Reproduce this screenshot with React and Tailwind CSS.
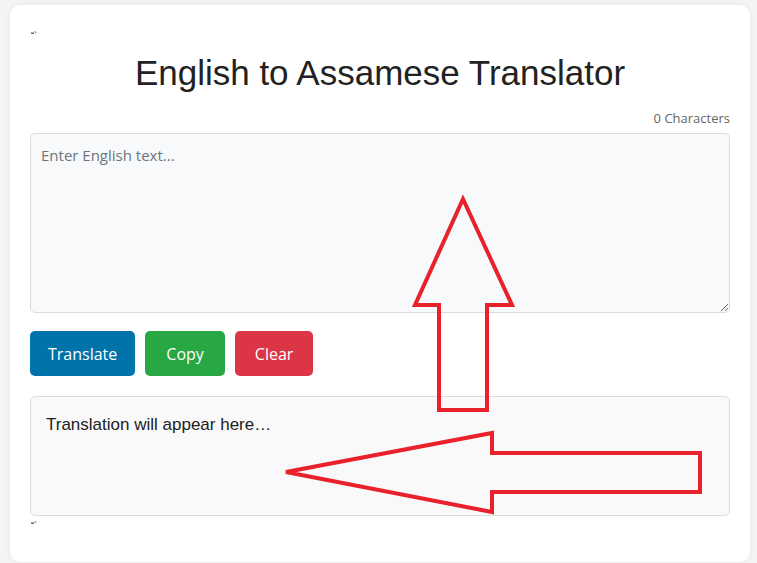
import { useState } from "react";

const App = () => {
    const [text, setText] = useState("");

    return (
        <div className="relative min-h-[563px] bg-[#f4f4f4] pt-[5px] pl-[10px] font-['Liberation_Sans',Arial,sans-serif]">
            <div className="w-[740px] h-[557px] bg-white rounded-[10px] shadow-[0_0_6px_rgba(0,0,0,0.06)] px-5 pt-[24px]">
                <div className="text-[9px] leading-[12px] text-black pl-px">“`</div>

                <h1 className="mt-[11px] text-center text-[35px] leading-[42px] text-[#222]">
                    English to Assamese Translator
                </h1>

                <div className="mt-[15px] text-right text-[13px] leading-[18px] text-[#666] font-['Open_Sans',sans-serif]">
                    {text.length} Characters
                </div>

                <textarea
                    value={text}
                    onChange={(e) => setText(e.target.value)}
                    placeholder="Enter English text..."
                    className="mt-[6px] block w-full h-[180px] rounded-[5px] border border-[#dcdcdc] bg-[#f8f9fa] px-[10px] py-[10px] text-[15px] leading-[22px] font-['Open_Sans',sans-serif] text-[#333] placeholder:text-[#6c757d] outline-none"
                />

                <div className="mt-[18px] flex gap-[10px] font-['Open_Sans',sans-serif]">
                    <button className="h-[45px] px-[18px] rounded-[5px] bg-[#0073aa] text-white text-[16px]">Translate</button>
                    <button className="h-[45px] px-[21px] rounded-[5px] bg-[#28a745] text-white text-[16px]">Copy</button>
                    <button className="h-[45px] px-5 rounded-[5px] bg-[#dc3545] text-white text-[16px]">Clear</button>
                </div>

                <div className="mt-[20px] h-[120px] rounded-[5px] border border-[#dcdcdc] bg-[#f9f9f9] p-[15px] text-[17px] leading-[25px] text-[#222]">
                    Translation will appear here…
                </div>

                <div className="mt-[3px] text-[9px] leading-[12px] text-black pl-px">“`</div>
            </div>

            {/* annotation arrows */}
            <svg className="absolute left-0 top-0 pointer-events-none" width="757" height="563" viewBox="0 0 757 563">
                <polygon
                    points="463,199 512,305 487,305 487,410 439,410 439,305 415,305"
                    fill="none"
                    stroke="#e8212b"
                    strokeWidth="4"
                    strokeLinejoin="miter"
                />
                <polygon
                    points="286,472 492,433 492,453 700,453 700,492 492,492 492,512"
                    fill="none"
                    stroke="#e8212b"
                    strokeWidth="4"
                    strokeLinejoin="miter"
                />
            </svg>
        </div>
    );
};

export default App;
